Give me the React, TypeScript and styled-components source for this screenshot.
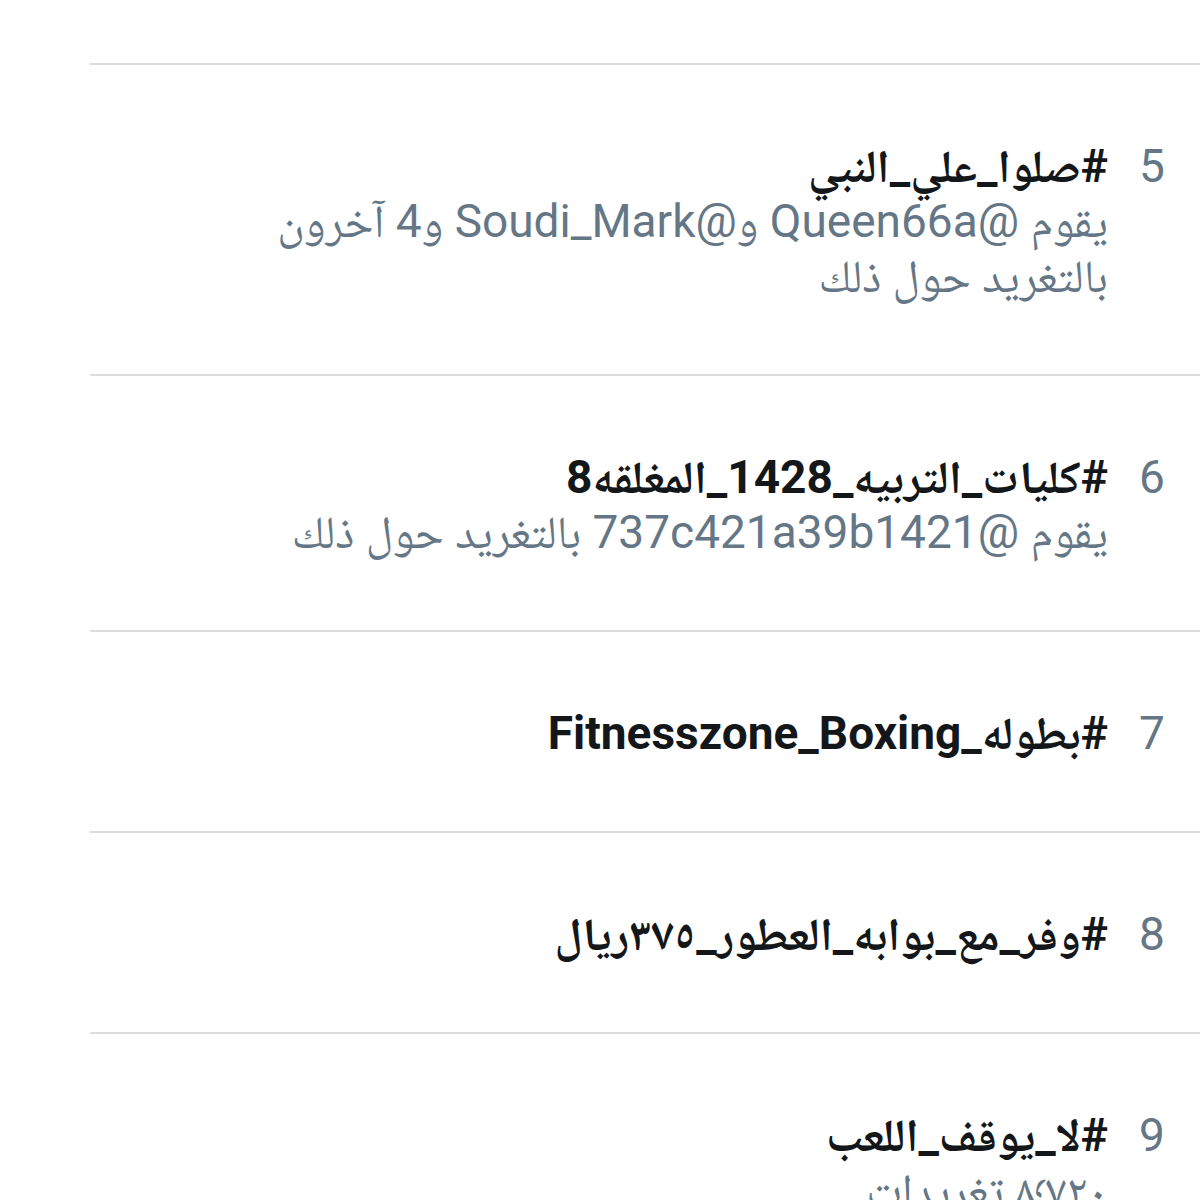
import styled, { createGlobalStyle } from "styled-components";

// Page reset and base font
const GlobalStyle = createGlobalStyle`
    body {
        margin: 0;
        background: #ffffff;
        font-family: Roboto, "Noto Naskh Arabic", "Noto Sans Arabic", "DejaVu Sans", sans-serif;
    }
`;

const TrendList = styled.div`
    direction: rtl;
    padding-top: 63px;
    height: 1200px;
    overflow: hidden;
    box-sizing: border-box;
`;

const TrendRow = styled.div`
    display: flex;
    align-items: flex-start;
    gap: 31px;
    margin-left: 90px;
    padding: 74px 35px 70px 0;
    border-top: 2px solid #dcdcdc;
`;

const Rank = styled.div`
    width: 26px;
    flex-shrink: 0;
    font-size: 46px;
    line-height: 55px;
    color: #657786;
    text-align: center;
`;

const TrendBody = styled.div`
    display: flex;
    flex-direction: column;
    flex: 1;
    min-width: 0;
`;

const TrendName = styled.div`
    font-size: 46px;
    font-weight: 700;
    line-height: 55px;
    color: #14171a;
`;

const TrendMeta = styled.div`
    font-size: 46px;
    line-height: 55px;
    color: #657786;
`;

interface Trend {
    rank: number;
    name: string;
    meta?: string[];
}

const trends: Trend[] = [
    {
        rank: 5,
        name: "#صلوا_علي_النبي",
        meta: ["يقوم @Queen66a و@Soudi_Mark و4 آخرون", "بالتغريد حول ذلك"],
    },
    {
        rank: 6,
        name: "#كليات_التربيه_1428_المغلقه8",
        meta: ["يقوم @737c421a39b1421 بالتغريد حول ذلك"],
    },
    { rank: 7, name: "#بطوله_Fitnesszone_Boxing" },
    { rank: 8, name: "#وفر_مع_بوابه_العطور_٣٧٥ريال" },
    { rank: 9, name: "#لا_يوقف_اللعب", meta: ["٨٬٧٢٠ تغريدات"] },
];

export default function App() {
    return (
        <>
            <GlobalStyle />
            <TrendList>
                {trends.map((trend) => (
                    <TrendRow key={trend.rank}>
                        <Rank>{trend.rank}</Rank>
                        <TrendBody>
                            <TrendName>{trend.name}</TrendName>
                            {trend.meta?.map((line) => (
                                <TrendMeta key={line}>{line}</TrendMeta>
                            ))}
                        </TrendBody>
                    </TrendRow>
                ))}
            </TrendList>
        </>
    );
}
